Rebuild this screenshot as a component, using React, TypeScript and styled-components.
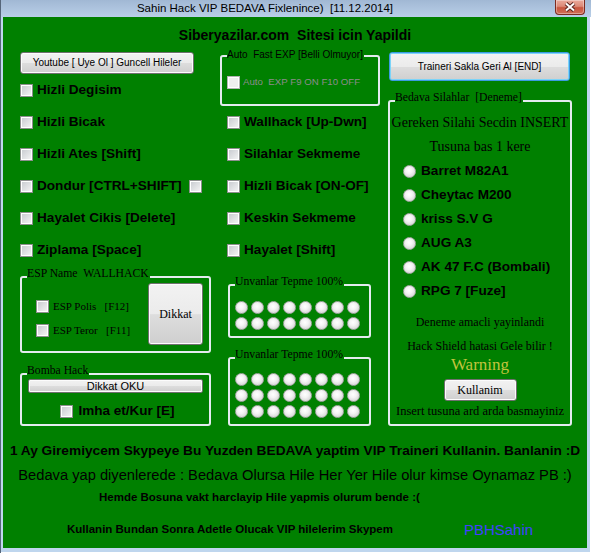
import styled, { createGlobalStyle } from "styled-components";

const GREEN = "#008000";

const GlobalStyle = createGlobalStyle`
  * { box-sizing: border-box; }
  html, body { margin: 0; padding: 0; background: #ffffff; }
  body { font-family: "Liberation Sans", Arial, sans-serif; }
`;

const Window = styled.div`
  width: 591px;
  height: 553px;
  display: flex;
  flex-direction: column;
  overflow: hidden;
`;

const TitleBar = styled.div`
  flex: none;
  height: 17px;
  display: flex;
  align-items: flex-start;
  background: linear-gradient(#a1b8d4, #b9cfe8);
  border-left: 1px solid #56667a;
`;

const Title = styled.div`
  flex: 1;
  padding-right: 26px;
  text-align: center;
  font: 11.5px/16px "Liberation Sans", Arial, sans-serif;
  color: #000;
  white-space: pre;
`;

const CloseButton = styled.div`
  width: 30px;
  height: 15px;
  margin-right: 6px;
  display: flex;
  align-items: center;
  justify-content: center;
  border: 1px solid #7d2b1f;
  border-top: none;
  border-radius: 0 0 4px 4px;
  background: linear-gradient(#eaa99b 0%, #dc8a78 45%, #c8563f 55%, #d36f57 100%);
  box-shadow: inset 0 0 0 1px rgba(255, 255, 255, 0.35);
`;

const Frame = styled.div`
  flex: 1;
  display: flex;
  padding: 0 4px 5px 2px;
  background: #bfd6ee;
  border-left: 1px solid #56667a;
  box-shadow: inset -1px -1px 0 #ffffff;
`;

const Body = styled.div`
  flex: 1;
  display: flex;
  flex-direction: column;
  padding-top: 8px;
  background: ${GREEN};
  color: #000;
`;

const Heading = styled.div`
  text-align: center;
  font: bold 14px/20px "Liberation Sans", Arial, sans-serif;
  white-space: pre;
`;

const Columns = styled.div`
  display: grid;
  grid-template-columns: 192px 160px 184px;
  column-gap: 8px;
  align-items: start;
  margin-top: 5px;
  padding-left: 17px;
`;

const Column = styled.div<{ $top?: number }>`
  display: flex;
  flex-direction: column;
  padding-top: ${(p) => p.$top ?? 0}px;
`;

const WinButton = styled.button<{ $focused?: boolean }>`
  display: flex;
  align-items: center;
  justify-content: center;
  margin: 0;
  padding: 0;
  border: 1px solid ${(p) => (p.$focused ? "#3c9ae0" : "#707070")};
  border-radius: 3px;
  background: linear-gradient(#f2f2f2 0%, #ebebeb 50%, #dddddd 51%, #cfcfcf 100%);
  box-shadow: inset 0 0 0 1px ${(p) => (p.$focused ? "#7cd4f8" : "#fcfcfc")};
  color: #000;
  font: 10px/12px "Liberation Sans", Arial, sans-serif;
  white-space: pre;
`;

const YoutubeButton = styled(WinButton)`
  width: 174px;
  height: 22px;
`;

const TrainerButton = styled(WinButton)`
  width: 181px;
  height: 29px;
  margin-left: 1px;
`;

const BigSerifButton = styled(WinButton)`
  width: 55px;
  height: 62px;
  margin: 3px 0 0 auto;
  font: 12px/14px "Liberation Serif", "Times New Roman", serif;
`;

const WideButton = styled(WinButton)`
  width: 175px;
  height: 14px;
  margin: 2px 0 0 6px;
  font: 11px/12px "Liberation Sans", Arial, sans-serif;
  border-radius: 2px;
`;

const SmallSerifButton = styled(WinButton)`
  width: 73px;
  height: 22px;
  margin: 7px auto 0;
  font: 12px/14px "Liberation Serif", "Times New Roman", serif;
`;

const Check = styled.span<{ $disabled?: boolean }>`
  flex: none;
  width: 13px;
  height: 13px;
  border: 1px solid ${(p) => (p.$disabled ? "#b4b4b4" : "#8e8f8f")};
  background: ${(p) =>
    p.$disabled ? "#efefef" : "linear-gradient(135deg, #c6c9ce, #f6f6f6)"};
  box-shadow: inset 0 0 0 1px #ffffff;
`;

const Radio = styled.span`
  flex: none;
  width: 13px;
  height: 13px;
  border-radius: 50%;
  border: 1px solid #a9a9a9;
  background: radial-gradient(circle at 45% 40%, #ffffff 0%, #f4f4f4 35%, #d6d6d6 80%, #c2c2c2 100%);
`;

const CheckRow = styled.div<{ $indent?: number }>`
  display: flex;
  align-items: center;
  gap: 4px;
  height: 32px;
  padding-left: ${(p) => p.$indent ?? 0}px;
  font: bold 13.6px/16px "Liberation Sans", Arial, sans-serif;
  white-space: pre;
`;

const ExtraCheck = styled(Check)`
  margin-left: 3px;
`;

const Group = styled.div<{ $width: number; $gap: number; $indent?: number }>`
  width: ${(p) => p.$width}px;
  margin-top: ${(p) => p.$gap}px;
  margin-left: ${(p) => p.$indent ?? 0}px;
  border: 2px solid #e4ebef;
  border-radius: 3px;
`;

const Legend = styled.div<{ $sans?: boolean }>`
  display: table;
  margin: ${(p) => (p.$sans ? "-8px" : "-10px")} 0 0 5px;
  padding-right: 1px;
  background: ${GREEN};
  font: ${(p) =>
    p.$sans
      ? `10px/12px "Liberation Sans", Arial, sans-serif`
      : `11.7px/12px "Liberation Serif", "Times New Roman", serif`};
  white-space: pre;
`;

const GroupBody = styled.div<{ $pad: string }>`
  padding: ${(p) => p.$pad};
`;

const EspRow = styled.div`
  display: flex;
  align-items: flex-start;
`;

const EspList = styled.div`
  display: flex;
  flex-direction: column;
  padding: 14px 0 0 14px;
`;

const SerifCheckRow = styled.div`
  display: flex;
  align-items: center;
  gap: 4px;
  height: 24px;
  font: 11px/12px "Liberation Serif", "Times New Roman", serif;
  white-space: pre;
`;

const CenterCheckRow = styled(CheckRow)`
  justify-content: center;
  height: 22px;
  margin-top: 7px;
  gap: 5px;
  padding-left: 4px;
  font-size: 13.5px;
`;

const DisabledRow = styled.div`
  display: flex;
  align-items: center;
  gap: 3px;
  height: 16px;
  color: #8c8c8c;
  font: 9.7px/14px "Liberation Sans", Arial, sans-serif;
  white-space: pre;
`;

const RadioGrid = styled.div`
  display: grid;
  grid-template-columns: repeat(8, 16px);
  grid-auto-rows: 16px;
  place-items: center;
`;

const SerifLine = styled.div<{ $size: number; $height: number; $color?: string; $top?: number }>`
  margin-top: ${(p) => p.$top ?? 0}px;
  text-align: center;
  font: ${(p) => p.$size}px/${(p) => p.$height}px "Liberation Serif", "Times New Roman", serif;
  color: ${(p) => p.$color ?? "#000"};
  white-space: pre;
`;

const RadioList = styled.div`
  display: flex;
  flex-direction: column;
  padding-left: 13px;
`;

const RadioRow = styled.div`
  display: flex;
  align-items: center;
  gap: 5px;
  height: 24px;
  font: bold 13.6px/16px "Liberation Sans", Arial, sans-serif;
  white-space: pre;
`;

const NoteBlock = styled.div`
  margin-top: 7px;
`;

const Footer = styled.div`
  display: flex;
  flex-direction: column;
  margin-top: 13px;
`;

const BigLine = styled.div<{ $bold?: boolean }>`
  text-align: center;
  font: ${(p) => (p.$bold ? "bold 13.7px" : "14.7px")}/24px "Liberation Sans", Arial, sans-serif;
  white-space: nowrap;
`;

const SmallLine = styled.div<{ $indent: number }>`
  display: flex;
  align-items: center;
  height: 20px;
  padding-left: ${(p) => p.$indent}px;
  font: bold 11.5px/20px "Liberation Sans", Arial, sans-serif;
`;

const SignLine = styled(SmallLine)`
  margin-top: 12px;
`;

const Signature = styled.span`
  align-self: flex-end;
  margin-left: 71px;
  color: #4040ff;
  font: normal 15px/18px "Liberation Sans", Arial, sans-serif;
`;

const leftChecks = [
  "Hizli Degisim",
  "Hizli Bicak",
  "Hizli Ates [Shift]",
  "Dondur [CTRL+SHIFT]",
  "Hayalet Cikis [Delete]",
  "Ziplama [Space]",
];

const midChecks = [
  "Wallhack [Up-Dwn]",
  "Silahlar Sekmeme",
  "Hizli Bicak [ON-OF]",
  "Keskin Sekmeme",
  "Hayalet [Shift]",
];

const weapons = [
  "Barret M82A1",
  "Cheytac M200",
  "kriss S.V G",
  "AUG A3",
  "AK 47 F.C (Bombali)",
  "RPG 7 [Fuze]",
];

const RadioBlock = ({ rows }: { rows: number }) => (
  <RadioGrid>
    {Array.from({ length: rows * 8 }).map((_, i) => (
      <Radio key={i} />
    ))}
  </RadioGrid>
);

export default function App() {
  return (
    <>
      <GlobalStyle />
      <Window>
        <TitleBar>
          <Title>Sahin Hack VIP BEDAVA Fixlenince)  [11.12.2014]</Title>
          <CloseButton>
            <svg width="14" height="10" viewBox="0 0 14 10">
              <path d="M3 1.5 L11 8.5 M11 1.5 L3 8.5" stroke="#5a2620" strokeWidth="4" />
              <path d="M3 1.5 L11 8.5 M11 1.5 L3 8.5" stroke="#ffffff" strokeWidth="2" />
            </svg>
          </CloseButton>
        </TitleBar>
        <Frame>
          <Body>
            <Heading>Siberyazilar.com  Sitesi icin Yapildi</Heading>
            <Columns>
              <Column $top={2}>
                <YoutubeButton>Youtube [ Uye Ol ] Guncell Hileler</YoutubeButton>
                {leftChecks.map((label, i) => (
                  <CheckRow key={label}>
                    <Check />
                    {label}
                    {i === 3 && <ExtraCheck />}
                  </CheckRow>
                ))}
                <Group $width={191} $gap={10}>
                  <Legend>ESP Name  WALLHACK</Legend>
                  <GroupBody $pad="0 6px 6px 0">
                    <EspRow>
                      <EspList>
                        <SerifCheckRow>
                          <Check />
                          ESP Polis   [F12]
                        </SerifCheckRow>
                        <SerifCheckRow>
                          <Check />
                          ESP Teror   [F11]
                        </SerifCheckRow>
                      </EspList>
                      <BigSerifButton>Dikkat</BigSerifButton>
                    </EspRow>
                  </GroupBody>
                </Group>
                <Group $width={191} $gap={20}>
                  <Legend>Bomba Hack</Legend>
                  <GroupBody $pad="0 0 2px 0">
                    <WideButton>Dikkat OKU</WideButton>
                    <CenterCheckRow>
                      <Check />
                      Imha et/Kur [E]
                    </CenterCheckRow>
                  </GroupBody>
                </Group>
              </Column>

              <Column $top={5}>
                <Group $width={160} $gap={0}>
                  <Legend $sans>Auto  Fast EXP [Belli Olmuyor]</Legend>
                  <GroupBody $pad="13px 5px 14px 5px">
                    <DisabledRow>
                      <Check $disabled />
                      Auto  EXP F9 ON F10 OFF
                    </DisabledRow>
                  </GroupBody>
                </Group>
                {midChecks.map((label) => (
                  <CheckRow key={label} $indent={7}>
                    <Check />
                    {label}
                  </CheckRow>
                ))}
                <Group $width={143} $gap={18} $indent={8}>
                  <Legend>Unvanlar Tepme 100%</Legend>
                  <GroupBody $pad="11px 0 5px 3px">
                    <RadioBlock rows={2} />
                  </GroupBody>
                </Group>
                <Group $width={143} $gap={19} $indent={8}>
                  <Legend>Unvanlar Tepme 100%</Legend>
                  <GroupBody $pad="10px 0 5px 3px">
                    <RadioBlock rows={3} />
                  </GroupBody>
                </Group>
              </Column>

              <Column $top={2}>
                <TrainerButton $focused>Traineri Sakla Geri Al [END]</TrainerButton>
                <Group $width={184} $gap={19}>
                  <Legend>Bedava Silahlar  [Deneme]</Legend>
                  <GroupBody $pad="7px 0 4px 0">
                    <SerifLine $size={14} $height={24}>
                      Gereken Silahi Secdin INSERT
                    </SerifLine>
                    <SerifLine $size={14} $height={24}>
                      Tusuna bas 1 kere
                    </SerifLine>
                    <RadioList>
                      {weapons.map((w) => (
                        <RadioRow key={w}>
                          <Radio />
                          {w}
                        </RadioRow>
                      ))}
                    </RadioList>
                    <NoteBlock>
                      <SerifLine $size={12} $height={24}>
                        Deneme amacli yayinlandi
                      </SerifLine>
                      <SerifLine $size={12} $height={24}>
                        Hack Shield hatasi Gele bilir !
                      </SerifLine>
                      <SerifLine $size={17} $height={14} $color="#c2c43e">
                        Warning
                      </SerifLine>
                    </NoteBlock>
                    <SmallSerifButton>Kullanim</SmallSerifButton>
                    <SerifLine $size={12.5} $height={18} $top={1}>
                      Insert tusuna ard arda basmayiniz
                    </SerifLine>
                  </GroupBody>
                </Group>
              </Column>
            </Columns>

            <Footer>
              <BigLine $bold>
                1 Ay Giremiycem Skypeye Bu Yuzden BEDAVA yaptim VIP Traineri Kullanin. Banlanin :D
              </BigLine>
              <BigLine>
                Bedava yap diyenlerede : Bedava Olursa Hile Her Yer Hile olur kimse Oynamaz PB :)
              </BigLine>
              <SmallLine $indent={96}>Hemde Bosuna vakt harclayip Hile yapmis olurum bende :(</SmallLine>
              <SignLine $indent={64}>
                Kullanin Bundan Sonra Adetle Olucak VIP hilelerim Skypem
                <Signature>PBHSahin</Signature>
              </SignLine>
            </Footer>
          </Body>
        </Frame>
      </Window>
    </>
  );
}
